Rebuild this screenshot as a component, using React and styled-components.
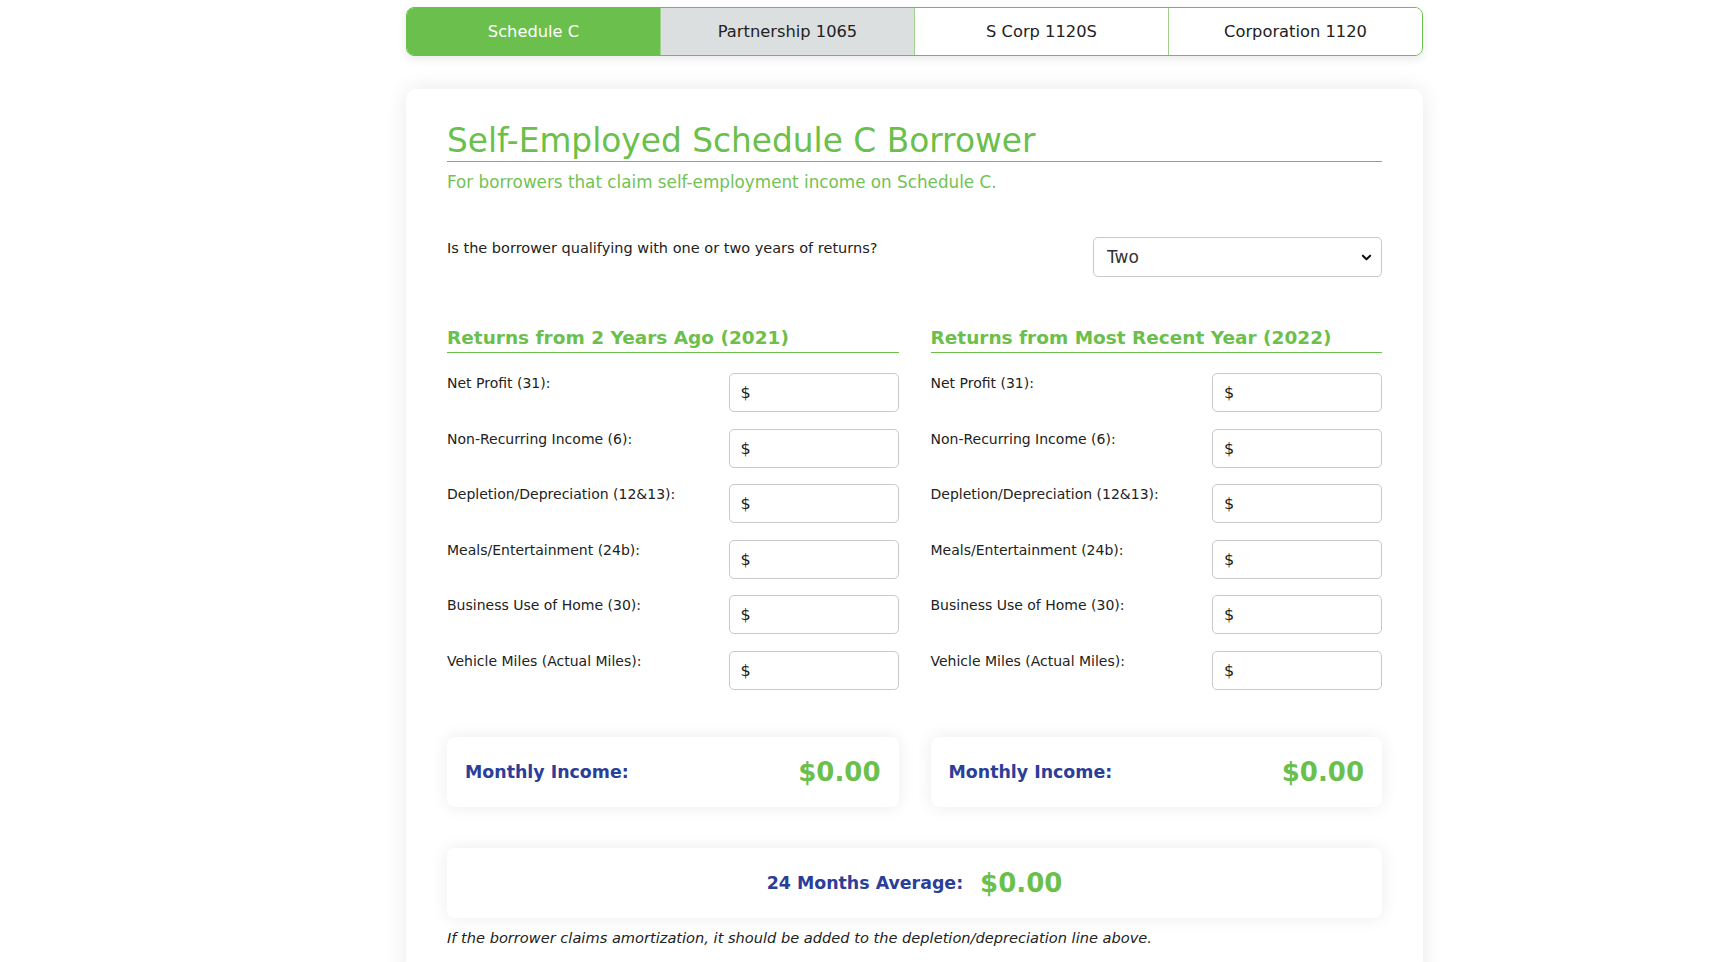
import React from 'react';
import styled, { createGlobalStyle } from 'styled-components';

const GREEN = '#6bbf4c';
const BLUE = '#2b3e98';

const GlobalStyle = createGlobalStyle`
    body {
        margin : 0;
        background : #fff;
        font-family : "DejaVu Sans", "Liberation Sans", sans-serif;
        color : #222;
    }
`

const Page = styled.div`
    width : 1017px;
    margin-left : 406px;
    padding-top : 7px;
`

const Tabs = styled.div`
    display : flex;
    height : 49px;
    border : 1px solid ${GREEN};
    border-radius : 8px;
    overflow : hidden;
    box-shadow : 0 3px 10px rgba(0, 0, 0, 0.09);
    box-sizing : border-box;
`

const Tab = styled.div`
    flex : 1;
    display : flex;
    align-items : center;
    justify-content : center;
    font-size : 16.3px;
    color : ${p => p.$active ? '#fff' : '#222'};
    background : ${p => p.$active ? GREEN : p.$hover ? '#dcdfe0' : '#fff'};
    & + & {
        border-left : 1px solid #9fd08c;
    }
`

const Card = styled.div`
    margin-top : 33px;
    background : #fff;
    border-radius : 10px;
    box-shadow : 0 0 22px rgba(0, 0, 0, 0.09);
    padding : 32px 41px 40px;
`

const Title = styled.h1`
    margin : 0;
    font-size : 32.8px;
    font-weight : 500;
    color : ${GREEN};
    line-height : 40px;
    border-bottom : 1px solid ${GREEN};
`

const Subtitle = styled.p`
    margin : 9px 0 0;
    font-size : 16.8px;
    color : #72c255;
    line-height : 22px;
`

const QuestionRow = styled.div`
    display : flex;
    justify-content : space-between;
    align-items : flex-start;
    margin-top : 44px;
`

const Question = styled.span`
    font-size : 14.5px;
    line-height : 20px;
    color : #222;
    margin-top : 1px;
`

const SelectWrap = styled.div`
    position : relative;
    width : 289px;
`

const Select = styled.select`
    appearance : none;
    width : 100%;
    height : 40px;
    border : 1px solid #c9c9c9;
    border-radius : 5px;
    background : #fff;
    padding : 0 13px;
    font-family : "DejaVu Sans", sans-serif;
    font-size : 17px;
    color : #333;
`

const Chevron = styled.svg`
    position : absolute;
    right : 10px;
    top : 15px;
    pointer-events : none;
`

const Columns = styled.div`
    display : grid;
    grid-template-columns : 1fr 1fr;
    column-gap : 32px;
    margin-top : 47px;
`

const Section = styled.div`
    display : flex;
    flex-direction : column;
`

const SectionTitle = styled.h2`
    margin : 0;
    font-size : 18.5px;
    font-weight : 600;
    color : ${GREEN};
    line-height : 28px;
    border-bottom : 1px solid ${GREEN};
    padding-bottom : 0;
`

const Fields = styled.div`
    display : flex;
    flex-direction : column;
    gap : 16.6px;
    margin-top : 20px;
`

const Field = styled.label`
    display : grid;
    grid-template-columns : 1fr 170px;
    align-items : start;
`

const FieldLabel = styled.span`
    font-size : 14px;
    line-height : 20px;
    color : #222;
`

const Input = styled.input`
    box-sizing : border-box;
    width : 170px;
    height : 39px;
    border : 1px solid #c9c9c9;
    border-radius : 5px;
    padding : 0 11px;
    font-family : "DejaVu Sans", sans-serif;
    font-size : 16px;
    color : #222;
    outline : none;
`

const IncomeBox = styled.div`
    display : flex;
    align-items : center;
    justify-content : ${p => p.$center ? 'center' : 'space-between'};
    gap : 17px;
    height : 70px;
    padding : 0 18px;
    margin-top : ${p => p.$top}px;
    background : #fff;
    border-radius : 8px;
    box-shadow : 0 0 18px rgba(0, 0, 0, 0.08);
`

const IncomeLabel = styled.span`
    font-size : 17.4px;
    font-weight : 600;
    color : ${BLUE};
`

const IncomeValue = styled.span`
    font-size : 26px;
    font-weight : 700;
    color : ${GREEN};
`

const Note = styled.p`
    margin : 11px 0 0;
    font-size : 14.6px;
    font-style : italic;
    color : #222;
`

const fields = [
    'Net Profit (31):',
    'Non-Recurring Income (6):',
    'Depletion/Depreciation (12&13):',
    'Meals/Entertainment (24b):',
    'Business Use of Home (30):',
    'Vehicle Miles (Actual Miles):',
]

const years = [
    'Returns from 2 Years Ago (2021)',
    'Returns from Most Recent Year (2022)',
]

export default function App() {
    return (
        <>
            <GlobalStyle />
            <Page>
                <Tabs>
                    <Tab $active>Schedule C</Tab>
                    <Tab $hover>Partnership 1065</Tab>
                    <Tab>S Corp 1120S</Tab>
                    <Tab>Corporation 1120</Tab>
                </Tabs>
                <Card>
                    <Title>Self-Employed Schedule C Borrower</Title>
                    <Subtitle>For borrowers that claim self-employment income on Schedule C.</Subtitle>
                    <QuestionRow>
                        <Question>Is the borrower qualifying with one or two years of returns?</Question>
                        <SelectWrap>
                            <Select defaultValue="two">
                                <option value="one">One</option>
                                <option value="two">Two</option>
                            </Select>
                            <Chevron width="11" height="11" viewBox="0 0 12 12">
                                <path d="M2 4l4 4 4-4" fill="none" stroke="#111" strokeWidth="2.2" strokeLinecap="round" strokeLinejoin="round" />
                            </Chevron>
                        </SelectWrap>
                    </QuestionRow>
                    <Columns>
                        {years.map((year, index) => {
                            return (
                                <Section key={index}>
                                    <SectionTitle>{year}</SectionTitle>
                                    <Fields>
                                        {fields.map((f, i) => (
                                            <Field key={i}>
                                                <FieldLabel>{f}</FieldLabel>
                                                <Input defaultValue="$" />
                                            </Field>
                                        ))}
                                    </Fields>
                                    <IncomeBox $top={47}>
                                        <IncomeLabel>Monthly Income:</IncomeLabel>
                                        <IncomeValue>$0.00</IncomeValue>
                                    </IncomeBox>
                                </Section>
                            )
                        })}
                    </Columns>
                    <IncomeBox $center $top={41}>
                        <IncomeLabel>24 Months Average:</IncomeLabel>
                        <IncomeValue>$0.00</IncomeValue>
                    </IncomeBox>
                    <Note>If the borrower claims amortization, it should be added to the depletion/depreciation line above.</Note>
                </Card>
            </Page>
        </>
    )
}
